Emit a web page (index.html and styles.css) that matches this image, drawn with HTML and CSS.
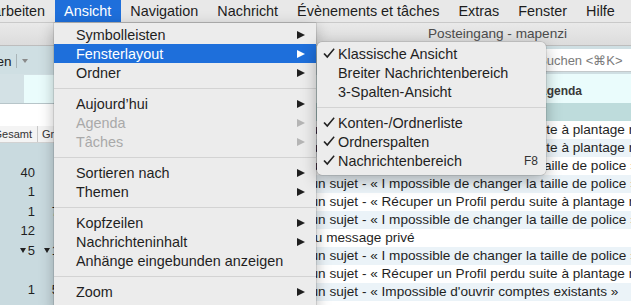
FILE: index.html
```html
<!DOCTYPE html>
<html lang="de">
<head>
  <meta charset="UTF-8">
  <title>Posteingang - mapenzi</title>
  <link rel="stylesheet" href="styles.css">
</head>
<body>

  <!-- Menüleiste -->
  <div class="menubar">
    <span class="menubar-item first">Bearbeiten</span>
    <span class="menubar-item active">Ansicht</span>
    <span class="menubar-item">Navigation</span>
    <span class="menubar-item">Nachricht</span>
    <span class="menubar-item">Évènements et tâches</span>
    <span class="menubar-item">Extras</span>
    <span class="menubar-item">Fenster</span>
    <span class="menubar-item">Hilfe</span>
  </div>

  <!-- Fenster -->
  <div class="window">
    <div class="titlebar">Posteingang - mapenzi</div>

    <div class="toolbar">
      <span class="tool-btn">Abrufen</span>
      <span class="tool-sep"></span>
      <span class="tool-drop"></span>
      <div class="search">Suchen &lt;⌘K&gt;</div>
    </div>

    <div class="tabbar">
      <div class="tab tab-main"></div>
      <div class="tab tab-agenda">Agenda</div>
    </div>

    <div class="panes">
      <div class="folder-pane">
        <div class="folder-filter"></div>
        <div class="folder-head">
          <span class="fh-total">Gesamt</span>
          <span class="fh-size">Größe</span>
        </div>
        <div class="folder-row"><span class="fc-total"></span><span class="fc-size"></span></div>
        <div class="folder-row"><span class="fc-total">40</span><span class="fc-size"></span></div>
        <div class="folder-row"><span class="fc-total">1</span><span class="fc-size"></span></div>
        <div class="folder-row"><span class="fc-total">1</span><span class="fc-size">7</span></div>
        <div class="folder-row"><span class="fc-total">12</span><span class="fc-size"></span></div>
        <div class="folder-row"><span class="fc-total"><i class="twisty"></i>5</span><span class="fc-size"><i class="twisty"></i>1</span></div>
        <div class="folder-row"><span class="fc-total"></span><span class="fc-size"></span></div>
        <div class="folder-row"><span class="fc-total">1</span><span class="fc-size">5</span></div>
      </div>

      <div class="thread-pane">
        <div class="thread-head"></div>
        <div class="thread-list">
          <div class="thread-row">Réponse à un sujet - « Récuper un Profil perdu suite à plantage réseau »</div>
          <div class="thread-row">Réponse à un sujet - « Récuper un Profil perdu suite à plantage réseau »</div>
          <div class="thread-row">Réponse à un sujet - « I mpossible de changer la taille de police »</div>
          <div class="thread-row">Réponse à un sujet - « I mpossible de changer la taille de police »</div>
          <div class="thread-row">Réponse à un sujet - « Récuper un Profil perdu suite à plantage réseau »</div>
          <div class="thread-row">Réponse à un sujet - « I mpossible de changer la taille de police »</div>
          <div class="thread-row row-pm">Nouveau message privé</div>
          <div class="thread-row">Réponse à un sujet - « I mpossible de changer la taille de police »</div>
          <div class="thread-row">Réponse à un sujet - « Récuper un Profil perdu suite à plantage réseau »</div>
          <div class="thread-row">Réponse à un sujet - « Impossible d'ouvrir comptes existants »</div>
        </div>
      </div>
    </div>
  </div>

  <!-- Menü "Ansicht" -->
  <div class="menu">
    <div class="menu-item"><span class="label">Symbolleisten</span><span class="arrow"></span></div>
    <div class="menu-item selected"><span class="label">Fensterlayout</span><span class="arrow"></span></div>
    <div class="menu-item"><span class="label">Ordner</span><span class="arrow"></span></div>
    <div class="menu-sep"></div>
    <div class="menu-item"><span class="label">Aujourd’hui</span><span class="arrow"></span></div>
    <div class="menu-item disabled"><span class="label">Agenda</span><span class="arrow"></span></div>
    <div class="menu-item disabled"><span class="label">Tâches</span><span class="arrow"></span></div>
    <div class="menu-sep"></div>
    <div class="menu-item"><span class="label">Sortieren nach</span><span class="arrow"></span></div>
    <div class="menu-item"><span class="label">Themen</span><span class="arrow"></span></div>
    <div class="menu-sep"></div>
    <div class="menu-item"><span class="label">Kopfzeilen</span><span class="arrow"></span></div>
    <div class="menu-item"><span class="label">Nachrichteninhalt</span><span class="arrow"></span></div>
    <div class="menu-item"><span class="label">Anhänge eingebunden anzeigen</span></div>
    <div class="menu-sep"></div>
    <div class="menu-item"><span class="label">Zoom</span><span class="arrow"></span></div>
  </div>

  <!-- Untermenü "Fensterlayout" -->
  <div class="submenu">
    <div class="sub-item"><span class="check"><svg width="12" height="11" viewBox="0 0 12 11"><path d="M0.4 6.1 L1.7 5 L4.2 7.7 L10.6 0.3 L11.7 1.2 L4.3 10.2 Z" fill="#222"/></svg></span><span class="label">Klassische Ansicht</span></div>
    <div class="sub-item"><span class="check"></span><span class="label">Breiter Nachrichtenbereich</span></div>
    <div class="sub-item"><span class="check"></span><span class="label">3-Spalten-Ansicht</span></div>
    <div class="menu-sep"></div>
    <div class="sub-item"><span class="check"><svg width="12" height="11" viewBox="0 0 12 11"><path d="M0.4 6.1 L1.7 5 L4.2 7.7 L10.6 0.3 L11.7 1.2 L4.3 10.2 Z" fill="#222"/></svg></span><span class="label">Konten-/Ordnerliste</span></div>
    <div class="sub-item"><span class="check"><svg width="12" height="11" viewBox="0 0 12 11"><path d="M0.4 6.1 L1.7 5 L4.2 7.7 L10.6 0.3 L11.7 1.2 L4.3 10.2 Z" fill="#222"/></svg></span><span class="label">Ordnerspalten</span></div>
    <div class="sub-item"><span class="check"><svg width="12" height="11" viewBox="0 0 12 11"><path d="M0.4 6.1 L1.7 5 L4.2 7.7 L10.6 0.3 L11.7 1.2 L4.3 10.2 Z" fill="#222"/></svg></span><span class="label">Nachrichtenbereich</span><span class="shortcut">F8</span></div>
  </div>

</body>
</html>
```

FILE: styles.css
```css
body {
  margin: 0;
  width: 631px;
  height: 305px;
  overflow: hidden;
  position: relative;
  font-family: "Liberation Sans", Arial, sans-serif;
  background: #c9dadf;
}

/* Menüleiste */
.menubar {
  display: flex;
  height: 22px;
  line-height: 22px;
  background: #e8e8e8;
  border-bottom: 1px solid #c9c9c9;
  font-size: 14.4px;
  color: #1d1d1d;
  white-space: nowrap;
}
.menubar-item {
  padding: 0 9.5px;
}
.menubar-item.first {
  margin-left: -34px;
}
.menubar-item.active {
  background: #1e6fdb;
  color: #fff;
}

/* Fenster */
.titlebar {
  height: 22px;
  line-height: 22px;
  padding-left: 428px;
  font-size: 13.6px;
  color: #4c4c4c;
  background: linear-gradient(#e9e9e9, #dcdcdc);
  border-bottom: 1px solid #bdbdbd;
  white-space: nowrap;
}
.toolbar {
  display: flex;
  align-items: center;
  height: 28px;
  background: #cfdfe3;
}
.tool-btn {
  margin-left: -36px;
  margin-right: 4px;
  font-size: 13.6px;
  color: #222;
  padding-top: 2px;
}
.tool-sep {
  width: 1px;
  height: 14px;
  background: #a9b4b7;
  margin-right: 5px;
  margin-top: 2px;
}
.tool-drop {
  width: 0;
  height: 0;
  border-top: 4px solid #8a8a8a;
  border-left: 3px solid transparent;
  border-right: 3px solid transparent;
  margin-top: 2px;
}
.search {
  margin-left: auto;
  width: 101px;
  height: 23px;
  line-height: 23px;
  box-sizing: border-box;
  padding-left: 8px;
  background: #fff;
  border-bottom: 1px solid #c3c9cb;
  font-size: 13px;
  color: #7a7a7a;
  white-space: nowrap;
  overflow: hidden;
}

.tabbar {
  display: flex;
  height: 29px;
  background: #d3e1e5;
}
.tab {
  background: #eafcfc;
}
.tab-main {
  margin-left: 24px;
  margin-top: 1px;
  width: 506px;
}
.tab-agenda {
  flex: 1;
  padding: 6px 0 0 8px;
  line-height: 23px;
  font-size: 12px;
  font-weight: bold;
  color: #3a3a3a;
}

.panes {
  display: flex;
}

/* Ordnerbereich */
.folder-pane {
  width: 230px;
  flex-shrink: 0;
  background: #c9dadf;
  height: 210px;
}
.folder-filter {
  height: 22px;
  background: #fff;
  border-top: 1px solid #b7c5c9;
}
.folder-head {
  display: flex;
  height: 16px;
  line-height: 16px;
  background: #f4f4f4;
  border-bottom: 1px solid #d2d2d2;
  font-size: 11px;
  color: #333;
  white-space: nowrap;
}
.fh-total {
  width: 38px;
  box-sizing: border-box;
  display: flex;
  justify-content: flex-end;
  padding-right: 5px;
  border-right: 1px solid #c8c8c8;
}
.fh-size {
  padding-left: 4px;
}
.folder-row {
  display: flex;
  height: 19.6px;
  line-height: 19.6px;
  font-size: 13px;
  color: #1f1f1f;
}
.fc-total,
.fc-size {
  display: flex;
  align-items: center;
  justify-content: flex-end;
  box-sizing: border-box;
}
.fc-total {
  width: 38px;
  padding-right: 3px;
}
.fc-size {
  width: 23px;
  padding-right: 2px;
}
.twisty {
  width: 0;
  height: 0;
  border-top: 5px solid #222;
  border-left: 3px solid transparent;
  border-right: 3px solid transparent;
  margin-right: 2px;
}

/* Nachrichtenliste */
.thread-pane {
  flex: 1;
  background: #fff;
  overflow: hidden;
}
.thread-head {
  height: 18px;
  background: #bedcdc;
}
.thread-row {
  height: 18px;
  line-height: 18px;
  padding-left: 11px;
  font-size: 13.6px;
  color: #1f1f1f;
  white-space: nowrap;
}
.thread-row:nth-child(even) {
  background: #ebf3f8;
}
.thread-row.row-pm {
  padding-left: 38px;
}

/* Menüs */
.menu,
.submenu {
  position: absolute;
  background: #ececec;
  font-size: 14.4px;
  color: #1f1f1f;
  white-space: nowrap;
}
.menu {
  left: 54px;
  top: 23px;
  width: 262px;
  padding: 2px 0 10px;
  box-shadow: 0 4px 14px rgba(0, 0, 0, 0.28), 0 0 0 0.5px rgba(0, 0, 0, 0.2);
}
.menu-item {
  display: flex;
  align-items: center;
  height: 19px;
  padding: 0 11px 0 22px;
}
.label {
  flex: 1;
}
.arrow {
  width: 0;
  height: 0;
  border-left: 8px solid #1f1f1f;
  border-top: 4.5px solid transparent;
  border-bottom: 4.5px solid transparent;
}
.menu-item.selected {
  background: #1e6fdb;
  color: #fff;
}
.menu-item.selected .arrow {
  border-left-color: #fff;
}
.menu-item.disabled {
  color: #a9a9a9;
}
.menu-item.disabled .arrow {
  border-left-color: #b5b5b5;
}
.menu-sep {
  height: 1px;
  margin: 5.5px 0;
  background: #d3d3d3;
}

.submenu {
  left: 317px;
  top: 42px;
  width: 229px;
  padding: 2px 0 5px;
  border-radius: 5px;
  box-shadow: 0 5px 16px rgba(0, 0, 0, 0.3), 0 0 0 0.5px rgba(0, 0, 0, 0.18);
}
.sub-item {
  display: flex;
  align-items: center;
  height: 19px;
  padding: 0 8px 0 6px;
}
.check {
  width: 15px;
  display: flex;
  align-items: center;
}
.shortcut {
  font-size: 12px;
  color: #333;
}
```
